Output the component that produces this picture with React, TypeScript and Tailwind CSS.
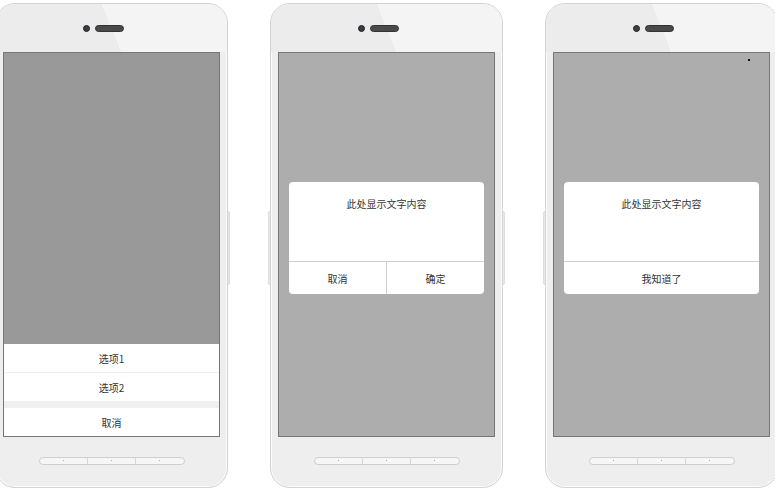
import React from "react";

const font = { fontFamily: '"Noto Sans CJK SC", "Noto Sans", sans-serif' };

function Phone({ screenBg, children, dot }: { screenBg: string; children?: React.ReactNode; dot?: boolean }) {
  return (
    <div className="relative w-[233px] h-[485px] shrink-0">
      <div className="absolute left-[-2px] top-[208px] w-[3px] h-[74px] rounded-l-[2px] bg-[#e8e8e8] border border-[#dcdcdc]" />
      <div className="absolute right-[-2px] top-[208px] w-[3px] h-[74px] rounded-r-[2px] bg-[#e8e8e8] border border-[#dcdcdc]" />
      <div className="relative flex flex-col w-full h-full rounded-[20px] border border-[#d3d3d3] bg-[#eeeeee] overflow-hidden shadow-[inset_0_0_0_1px_#fbfbfb]">
        <div className="h-[48px] flex items-center justify-center pr-[16px] bg-[linear-gradient(68deg,#ececec_50%,#f4f4f4_50%)]">
          <div className="w-[7px] h-[7px] rounded-full bg-[#3a3d44] border border-[#222]" />
          <div className="ml-[5px] w-[29px] h-[7px] rounded-full bg-[#4a4a4a] border border-[#333]" />
        </div>
        <div className="ml-[7px] w-[217px] h-[385px] border border-[#777] relative" style={{ background: screenBg }}>
          {dot && <div className="absolute left-[194px] top-[6px] w-[2px] h-[2px] bg-[#111]" />}
          {children}
        </div>
        <div className="flex-1 flex justify-center pt-[20px]">
          <div className="w-[146px] h-[8px] rounded-full border border-[#cfcfcf] bg-[#f6f6f6] flex">
            <div className="flex-1 flex justify-center border-r border-[#d6d6d6]"><div className="w-[1px] h-[1px] bg-[#aaa] mt-[2px]" /></div>
            <div className="flex-1 flex justify-center border-r border-[#d6d6d6]"><div className="w-[1px] h-[1px] bg-[#aaa] mt-[2px]" /></div>
            <div className="flex-1 flex justify-center"><div className="w-[1px] h-[1px] bg-[#aaa] mt-[2px]" /></div>
          </div>
        </div>
      </div>
    </div>
  );
}

function Dialog({ buttons }: { buttons: string[] }) {
  return (
    <div className="pt-[129px] pl-[10px]">
      <div className="w-[195px] bg-white rounded-[4px] text-[10px] text-[#333]">
        <div className="h-[79px] pt-[15px] text-center leading-[14px]">此处显示文字内容</div>
        <div className="h-[33px] border-t border-[#d0d0d0] flex">
          {buttons.map((b, i) => (
            <div key={b} className={"flex-1 flex items-center justify-center " + (i > 0 ? "border-l border-[#d0d0d0]" : "")}>
              {b}
            </div>
          ))}
        </div>
      </div>
    </div>
  );
}

export default function App() {
  return (
    <div className="w-[775px] h-[491px] bg-white overflow-hidden" style={font}>
      <div className="flex gap-[42px] ml-[-5px] pt-[3px]">
        <Phone screenBg="#999999">
          <div className="flex flex-col h-full">
            <div className="flex-1" />
            <div className="text-[10px] text-[#333] bg-[#f0f0f0]">
              <div className="h-[28px] bg-white flex items-center justify-center">选项1</div>
              <div className="h-[28px] mt-[1px] bg-white flex items-center justify-center">选项2</div>
              <div className="h-[28px] mt-[7px] bg-white flex items-center justify-center">取消</div>
            </div>
          </div>
        </Phone>
        <Phone screenBg="#adadad">
          <Dialog buttons={["取消", "确定"]} />
        </Phone>
        <Phone screenBg="#adadad" dot>
          <Dialog buttons={["我知道了"]} />
        </Phone>
      </div>
    </div>
  );
}
